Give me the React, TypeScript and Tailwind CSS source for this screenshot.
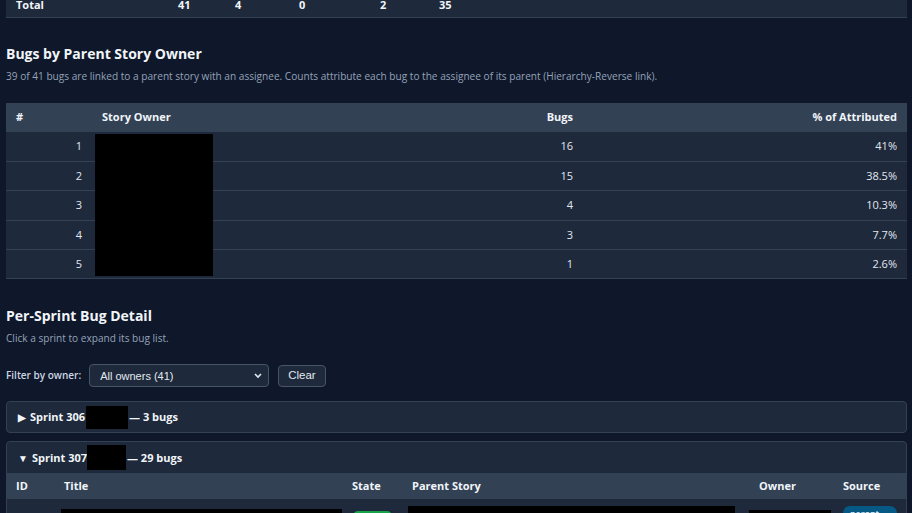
import React from "react";

const owners = [
  { n: 1, bugs: 16, pct: "41%" },
  { n: 2, bugs: 15, pct: "38.5%" },
  { n: 3, bugs: 4, pct: "10.3%" },
  { n: 4, bugs: 3, pct: "7.7%" },
  { n: 5, bugs: 1, pct: "2.6%" },
];

export default function App() {
  return (
    <div
      className="h-[513px] w-[912px] overflow-hidden bg-[#0f172a] text-[#e2e8f0]"
      style={{ fontFamily: '"Open Sans", "Noto Sans", sans-serif' }}
    >
      <div className="px-[6px] pr-[5px]">
        {/* Totals table (scrolled) */}
        <div className="-mt-[12px] border-b border-[#334155] bg-[#1e293b]">
          <div className="relative flex h-[29px] items-center pt-[6px] text-[11px] font-bold text-[#f1f5f9]">
            <span className="pl-[10px]">Total</span>
            <span className="absolute left-[172px]">41</span>
            <span className="absolute left-[229px]">4</span>
            <span className="absolute left-[293px]">0</span>
            <span className="absolute left-[374px]">2</span>
            <span className="absolute left-[433px]">35</span>
          </div>
        </div>

        <h2 className="mt-[26px] text-[14px] font-bold leading-[20px] text-[#f1f5f9]">
          Bugs by Parent Story Owner
        </h2>
        <p className="mt-[4px] text-[10.1px] leading-[16px] text-[#94a3b8]">
          39 of 41 bugs are linked to a parent story with an assignee. Counts attribute each bug to the assignee of its parent (Hierarchy-Reverse link).
        </p>

        <div className="relative mt-[19px]">
          <table className="w-full table-fixed border-collapse text-[11px]">
            <colgroup>
              <col className="w-[86px]" />
              <col className="w-[300px]" />
              <col className="w-[191px]" />
              <col />
            </colgroup>
            <thead>
              <tr className="h-[29px] bg-[#334155] font-bold text-[#f1f5f9]">
                <th className="px-[10px] text-left">#</th>
                <th className="px-[10px] text-left">Story Owner</th>
                <th className="px-[10px] text-right">Bugs</th>
                <th className="px-[10px] text-right">% of Attributed</th>
              </tr>
            </thead>
            <tbody>
              {owners.map((o) => (
                <tr key={o.n} className="h-[29.4px] border-b border-[#334155] bg-[#1e293b]">
                  <td className="px-[10px] text-right">{o.n}</td>
                  <td className="px-[10px]"></td>
                  <td className="px-[10px] text-right">{o.bugs}</td>
                  <td className="px-[10px] text-right">{o.pct}</td>
                </tr>
              ))}
            </tbody>
          </table>
          <div className="absolute left-[89px] top-[31px] h-[142px] w-[118px] bg-black" />
        </div>

        <h2 className="mt-[27px] text-[14px] font-bold leading-[20px] text-[#f1f5f9]">
          Per-Sprint Bug Detail
        </h2>
        <p className="mt-[4px] text-[10.1px] leading-[16px] text-[#94a3b8]">
          Click a sprint to expand its bug list.
        </p>

        <div className="mt-[18px] flex h-[23px] items-center">
          <span className="text-[10px] font-semibold text-[#cbd5e1]">Filter by owner:</span>
          <div className="relative ml-[8px] flex h-[23px] w-[180px] items-center rounded-[4px] border border-[#475569] bg-[#1e293b] pl-[10px] text-[11px] text-[#e2e8f0]" style={{ fontFamily: '"Liberation Sans", Arial, sans-serif' }}>
            All owners (41)
            <svg className="absolute right-[6px] top-[8px]" width="8" height="6" viewBox="0 0 8 6">
              <path d="M1 1 L4 4 L7 1" fill="none" stroke="#e2e8f0" strokeWidth="1.6" />
            </svg>
          </div>
          <button className="ml-[9px] h-[22px] rounded-[4px] border border-[#475569] bg-[#1e293b] px-[9px] text-[11.5px] text-[#e2e8f0]" style={{ fontFamily: '"Liberation Sans", Arial, sans-serif' }}>
            Clear
          </button>
        </div>

        <div className="mt-[14px] flex h-[32px] items-center rounded-[4px] border border-[#334155] bg-[#1e293b] pl-[11px] text-[11px] font-bold text-[#f1f5f9]">
          <span className="mr-[4px] text-[10px] leading-none">▶</span>
          <span>Sprint 306</span>
          <span className="ml-[1px] h-[23px] w-[42px] bg-black" />
          <span className="ml-[1px]">— 3 bugs</span>
        </div>

        <div className="mt-[8px] rounded-[4px] border border-[#334155] bg-[#1e293b]">
          <div className="flex h-[31px] items-center pl-[11px] text-[11px] font-bold text-[#f1f5f9]">
            <span className="mr-[4px] text-[10px] leading-none">▼</span>
            <span>Sprint 307</span>
            <span className="ml-[0px] h-[25px] w-[39px] bg-black" />
            <span className="ml-[1px]">— 29 bugs</span>
          </div>
          <table className="w-full table-fixed border-collapse text-[11px]">
            <colgroup>
              <col className="w-[47px]" />
              <col className="w-[288px]" />
              <col className="w-[60px]" />
              <col className="w-[347px]" />
              <col className="w-[84px]" />
              <col />
            </colgroup>
            <thead>
              <tr className="h-[26px] bg-[#334155] font-bold text-[#f1f5f9]">
                <th className="px-[9px] text-left">ID</th>
                <th className="px-[10px] text-left">Title</th>
                <th className="px-[10px] text-left">State</th>
                <th className="px-[10px] text-left">Parent Story</th>
                <th className="px-[10px] text-left">Owner</th>
                <th className="px-[10px] text-left">Source</th>
              </tr>
            </thead>
            <tbody>
              <tr className="h-[30px] align-top">
                <td></td>
                <td className="pt-[10px] pl-[7px]"><div className="h-[10px] w-[281px] bg-black" /></td>
                <td className="pt-[12px] pl-[11px]"><div className="h-[10px] w-[39px] rounded-full bg-[#16a34a]" /></td>
                <td className="pt-[7px] pl-[6px]"><div className="h-[14px] w-[327px] bg-black" /></td>
                <td className="pt-[11px]"><div className="h-[10px] w-[82px] bg-black" /></td>
                <td className="pt-[6px] pl-[10px]">
                  <span className="inline-block w-[54px] rounded-[8px] bg-[#075985] px-[7px] pt-[1px] text-[9px] font-semibold leading-[13px] text-[#e0f2fe]">parent</span>
                </td>
              </tr>
            </tbody>
          </table>
        </div>
      </div>
    </div>
  );
}
